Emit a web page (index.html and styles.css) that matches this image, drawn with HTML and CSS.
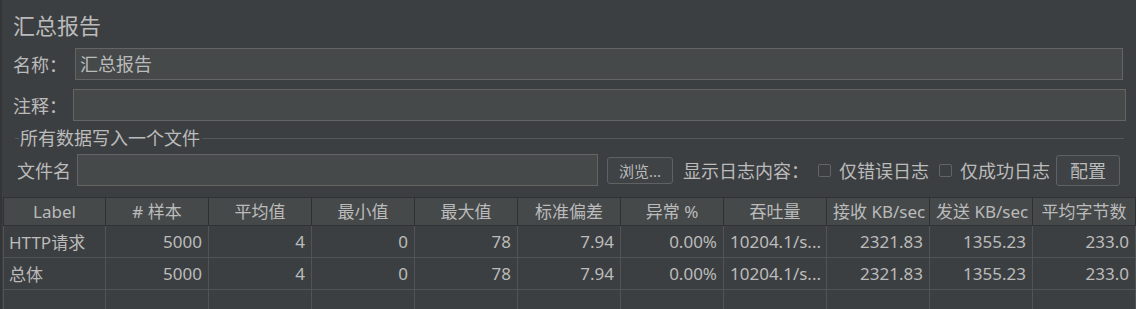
FILE: index.html
```html
<!DOCTYPE html>
<html lang="zh-CN">
<head>
<meta charset="utf-8">
<title>汇总报告</title>
<link rel="stylesheet" href="styles.css">
</head>
<body>
<div class="panel">
  <div class="title">汇总报告</div>
  <div class="row name-row">
    <span class="lbl lbl-name">名称：</span>
    <div class="field name-field">汇总报告</div>
  </div>
  <div class="row comment-row">
    <span class="lbl lbl-comment">注释：</span>
    <div class="field comment-field"></div>
  </div>
  <div class="group-title">
    <span class="gline gline-left"></span>
    <span class="gtext">所有数据写入一个文件</span>
    <span class="gline gline-right"></span>
  </div>
  <div class="file-row">
    <span class="lbl lbl-file">文件名</span>
    <div class="field file-field"></div>
    <span class="btn btn-browse">浏览...</span>
    <span class="log-label">显示日志内容：</span>
    <span class="check check-error"><span class="box"></span><span class="ctext">仅错误日志</span></span>
    <span class="check check-success"><span class="box"></span><span class="ctext">仅成功日志</span></span>
    <span class="btn btn-config">配置</span>
  </div>
  <table class="grid">
    <colgroup>
      <col class="col-first"><col><col><col><col><col><col><col><col><col><col>
    </colgroup>
    <thead>
      <tr>
        <th>Label</th><th># 样本</th><th>平均值</th><th>最小值</th><th>最大值</th><th>标准偏差</th><th>异常 %</th><th>吞吐量</th><th>接收 KB/sec</th><th>发送 KB/sec</th><th>平均字节数</th>
      </tr>
    </thead>
    <tbody>
      <tr>
        <td class="txt">HTTP请求</td><td>5000</td><td>4</td><td>0</td><td>78</td><td>7.94</td><td>0.00%</td><td>10204.1/s...</td><td>2321.83</td><td>1355.23</td><td>233.0</td>
      </tr>
      <tr>
        <td class="txt">总体</td><td>5000</td><td>4</td><td>0</td><td>78</td><td>7.94</td><td>0.00%</td><td>10204.1/s...</td><td>2321.83</td><td>1355.23</td><td>233.0</td>
      </tr>
      <tr class="empty">
        <td></td><td></td><td></td><td></td><td></td><td></td><td></td><td></td><td></td><td></td><td></td>
      </tr>
    </tbody>
  </table>
</div>
</body>
</html>
```

FILE: styles.css
```css
html, body {
  margin: 0;
  padding: 0;
  background: #3c3f41;
  overflow: hidden;
}

body {
  color: #bbbbbb;
  font-family: "Noto Sans", "Noto Sans CJK SC", sans-serif;
  font-size: 17px;
}

.panel {
  width: 1136px;
  height: 309px;
  box-sizing: border-box;
  border-left: 2px solid #333537;
  padding-top: 10px;
  overflow: hidden;
}

.title {
  font-size: 22px;
  line-height: 28px;
  height: 28px;
  padding-left: 11px;
  font-family: "Noto Sans CJK SC", sans-serif;
}

.row {
  display: flex;
  align-items: center;
  height: 32px;
}

.name-row {
  margin-top: 10px;
  padding-right: 13px;
}

.comment-row {
  margin-top: 9px;
  padding-right: 10px;
}

.lbl {
  padding-left: 11px;
  flex: none;
  white-space: nowrap;
  font-size: 18px;
  box-sizing: border-box;
}

.lbl-name { width: 73px; }
.lbl-comment { width: 71px; }

.field {
  height: 32px;
  box-sizing: border-box;
  background: #45494a;
  border: 1px solid #646464;
  flex: 1;
  line-height: 30px;
  padding-left: 4px;
  font-size: 18px;
}

.group-title {
  display: flex;
  align-items: center;
  height: 20px;
  margin-top: 7px;
  padding-left: 13px;
  padding-right: 12px;
}

.gline {
  height: 1px;
  background: #555759;
}

.gline-left {
  width: 4px;
}

.gline-right {
  flex: 1;
}

.gtext {
  padding: 0 2px 0 1px;
  line-height: 20px;
  font-size: 18px;
}

.file-row {
  display: flex;
  align-items: center;
  height: 32px;
  margin-top: 6px;
}

.lbl-file {
  padding-left: 15px;
  width: 75px;
}

.file-field {
  flex: none;
  width: 521px;
}

.btn {
  box-sizing: border-box;
  border: 1px solid #5e6264;
  border-radius: 3px;
  background: #3f4345;
  display: flex;
  align-items: center;
  justify-content: center;
  flex: none;
}

.btn-browse {
  margin-left: 9px;
  width: 66px;
  height: 27px;
  font-size: 15px;
}

.log-label {
  margin-left: 10px;
  white-space: nowrap;
  font-size: 18px;
  width: 126px;
  flex: none;
}

.check {
  display: flex;
  align-items: center;
  white-space: nowrap;
  font-size: 18px;
  flex: none;
}

.check-error {
  margin-left: 9px;
}

.check-success {
  margin-left: 10px;
}

.ctext {
  width: 90px;
}

.box {
  width: 13px;
  height: 13px;
  box-sizing: border-box;
  border: 1px solid #626466;
  border-radius: 2px;
  margin-right: 8px;
}

.btn-config {
  margin-left: 6px;
  width: 64px;
  height: 31px;
  font-size: 18px;
}

.grid {
  margin-top: 11px;
  margin-left: 1px;
  border-collapse: collapse;
  table-layout: fixed;
  width: 1132px;
}

.grid col {
  width: 103px;
}

.grid col.col-first {
  width: 102px;
}

.grid th,
.grid td {
  box-sizing: border-box;
  white-space: nowrap;
  overflow: hidden;
  font-weight: normal;
  padding: 0 6px;
}

.grid th {
  height: 28px;
  background: #45494a;
  border: 1px solid #2f3133;
  text-align: center;
  line-height: 26px;
}

.grid td {
  height: 32px;
  border: 1px solid #515456;
  text-align: right;
  background: #3c3f41;
}

.grid td.txt {
  text-align: left;
  padding-left: 5px;
}

.grid tr.empty td {
  height: 24px;
}
```
